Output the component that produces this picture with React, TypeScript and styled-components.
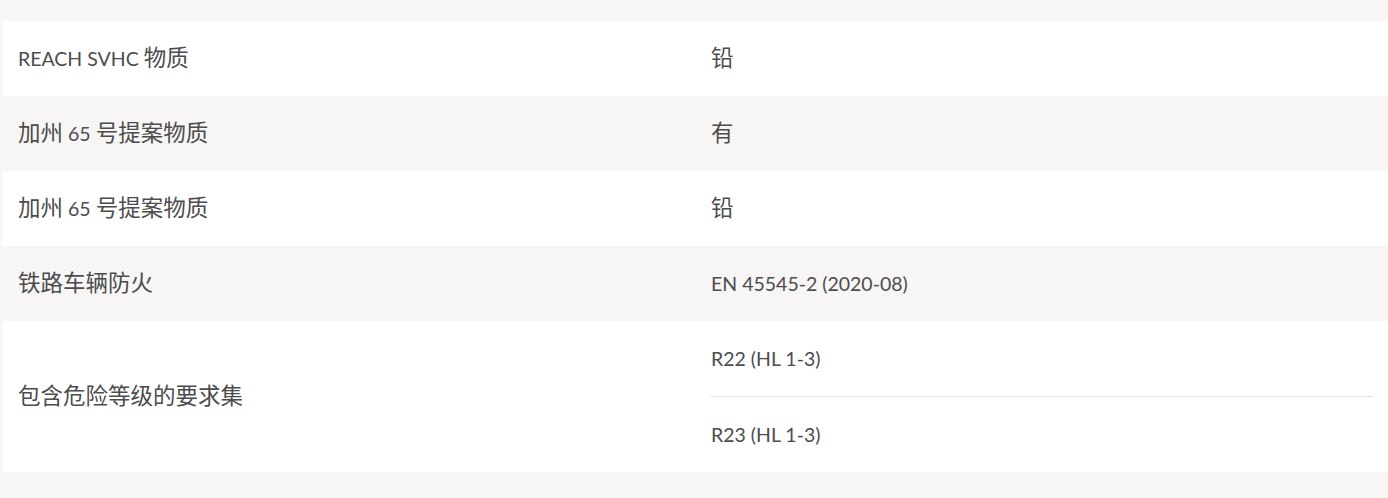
import React from "react";
import styled, { createGlobalStyle } from "styled-components";

interface Row {
  label: string;
  values: string[];
}

const rows: Row[] = [
  { label: "REACH SVHC 物质", values: ["铅"] },
  { label: "加州 65 号提案物质", values: ["有"] },
  { label: "加州 65 号提案物质", values: ["铅"] },
  { label: "铁路车辆防火", values: ["EN 45545-2 (2020-08)"] },
  { label: "包含危险等级的要求集", values: ["R22 (HL 1-3)", "R23 (HL 1-3)"] },
];

const GlobalStyle = createGlobalStyle`
  html, body {
    margin: 0;
    padding: 0;
    background: #f7f6f4;
  }
  body {
    font-family: "Source Sans Pro", Lato, "Noto Sans CJK SC", sans-serif;
    color: #4c4c4e;
  }
`;

const Page = styled.div`
  padding: 21px 0 26px 2px;
`;

const Table = styled.div`
  display: grid;
  grid-template-columns: 693px 1fr;
`;

const TableRow = styled.div<{ $striped: boolean }>`
  display: contents;

  & > div {
    background: ${(p) => (p.$striped ? "#f7f6f4" : "#ffffff")};
  }
`;

const LabelCell = styled.div`
  display: flex;
  align-items: center;
  padding: 0 16px;
  font-size: 19.5px;
  line-height: 24px;
`;

const ValueCell = styled.div`
  display: flex;
  flex-direction: column;
`;

const Value = styled.div`
  display: flex;
  align-items: center;
  height: 75px;
  margin: 0 15px 0 16px;
  font-size: 19.5px;
  line-height: 24px;

  & + & {
    border-top: 1px solid #e2e2e2;
  }
`;

// the CJK glyphs run a little larger than the latin text;
// a zero line-height keeps them from pushing the line box around
const Cjk = styled.span`
  font-family: "Noto Sans CJK SC", sans-serif;
  font-size: 22.5px;
  line-height: 0;
`;

const Text = ({ children }: { children: string }): JSX.Element => {
  const parts = children.split(/([\u3400-\u9fff]+)/);
  return (
    <span>
      {parts.map((p, i) =>
        i % 2 === 1 ? <Cjk key={i}>{p}</Cjk> : p
      )}
    </span>
  );
};

const App = (): JSX.Element => {
  return (
    <>
      <GlobalStyle />
      <Page>
        <Table>
          {rows.map((row, i) => (
            <TableRow key={i} $striped={i % 2 === 1}>
              <LabelCell>
                <Text>{row.label}</Text>
              </LabelCell>
              <ValueCell>
                {row.values.map((v, j) => (
                  <Value key={j}>
                    <Text>{v}</Text>
                  </Value>
                ))}
              </ValueCell>
            </TableRow>
          ))}
        </Table>
      </Page>
    </>
  );
};

export default App;
